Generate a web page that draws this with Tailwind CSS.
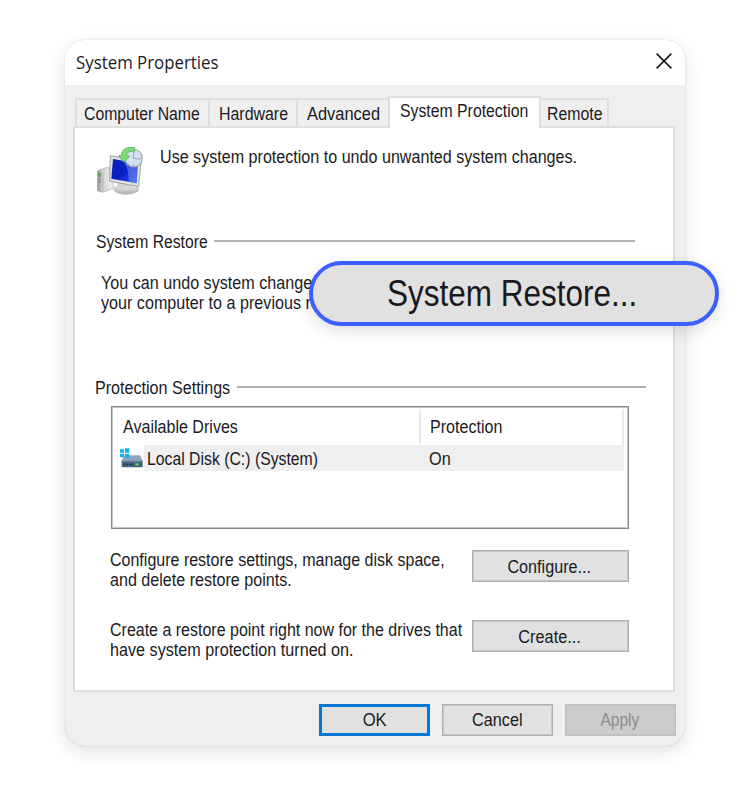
<!DOCTYPE html>
<html lang="en">
<head>
<meta charset="utf-8">
<title>System Properties</title>
<script src="https://cdn.jsdelivr.net/npm/@tailwindcss/browser@4"></script>
</head>
<body class="bg-white w-[750px] h-[787px] overflow-hidden pt-[40px] pl-[65px] font-['Liberation_Sans',Arial,sans-serif] text-[17.5px] leading-[20px] text-[#1a1a1e]">
<main class="relative w-[620px] h-[706px]">
  <div class="w-full h-full rounded-[20px] overflow-hidden bg-[#efefef] flex flex-col shadow-[0_5px_18px_rgba(0,0,0,0.12),0_0_1px_rgba(0,0,0,0.3)]">
    <header class="h-[45px] shrink-0 bg-white flex items-center justify-between pl-[11px] pr-[13px]">
      <h1 class="font-['Open_Sans',sans-serif] text-[19px] leading-[26px] -mt-[2px] w-[150px] whitespace-nowrap origin-left scale-x-[0.886]">System Properties</h1>
      <svg class="w-4 h-4 -mt-[3px]" viewBox="0 0 16 16" fill="none" stroke="#111" stroke-width="1.5"><path d="M.6.6l14.8 14.8M15.4.6L.6 15.4"/></svg>
    </header>

    <nav class="flex items-end h-[32px] mt-[11px] ml-[10px] shrink-0 relative z-10 whitespace-nowrap">
      <div class="w-[133px] h-[29px] border-2 border-b-0 border-r-0 border-[#dedede] pl-[7px] pt-[4px] mb-[1px]"><span class="inline-block origin-left scale-x-[0.902]">Computer Name</span></div>
      <div class="w-[88px] h-[29px] border-2 border-b-0 border-r-0 border-[#dedede] pl-[9px] pt-[4px] mb-[1px]"><span class="inline-block origin-left scale-x-[0.91]">Hardware</span></div>
      <div class="w-[92px] h-[29px] border-2 border-b-0 border-r-0 border-[#dedede] pl-[9px] pt-[4px] mb-[1px]"><span class="inline-block origin-left scale-x-[0.938]">Advanced</span></div>
      <div class="w-[153px] h-[32px] bg-white border-2 border-b-0 border-[#dedede] pl-[10px] pt-[3px]"><span class="inline-block origin-left scale-x-[0.903]">System Protection</span></div>
      <div class="w-[68px] h-[29px] border-2 border-b-0 border-l-0 border-[#dedede] pl-[6px] pt-[4px] mb-[1px]"><span class="inline-block origin-left scale-x-[0.905]">Remote</span></div>
    </nav>

    <section class="-mt-[2px] mx-[8px] w-[602px] h-[566px] shrink-0 bg-white border-2 border-[#dedede] flex flex-col">
      <div class="flex h-[67px] pt-[19px] pl-[22px]">
        <svg class="w-[48px] h-[48px] shrink-0" viewBox="36 21 144 144">
          <defs>
            <linearGradient id="scr" x1="0" y1="0" x2="1" y2="1"><stop offset="0" stop-color="#0a23b4"/><stop offset=".5" stop-color="#0b1fc4"/><stop offset="1" stop-color="#2b5be8"/></linearGradient>
            <linearGradient id="twr"><stop offset="0" stop-color="#8e9290"/><stop offset=".35" stop-color="#d4d6d5"/><stop offset="1" stop-color="#f0f0f0"/></linearGradient>
            <linearGradient id="bas" x1="0" y1="0" x2="0" y2="1"><stop offset="0" stop-color="#f4f4f4"/><stop offset="1" stop-color="#a9abab"/></linearGradient>
          </defs>
          <path d="M37 93l28-11 20 5v58l-32 12-16-5z" fill="url(#twr)" stroke="#a4a6a5" stroke-width="2"/>
          <path d="M54 96v59" stroke="#a8aaa9" stroke-width="2"/>
          <path d="M40 99l8 2v9l-8-2z" fill="#4d6b4b"/><circle cx="44" cy="105" r="3.5" fill="#45c247"/>
          <path d="M39 117l10 2M39 124l10 2" stroke="#777" stroke-width="2"/>
          <ellipse cx="124" cy="148" rx="37" ry="15" fill="url(#bas)" stroke="#b3b5b5" stroke-width="2"/>
          <path d="M95 122l43 9 2 17q-20 8-42-1z" fill="#d3d5d5"/>
          <path d="M76 47l92 16-7 77-87-17z" fill="#e1e2e1" stroke="#909493" stroke-width="2.5"/>
          <path d="M84 57l75 13-4 60-76-14z" fill="url(#scr)"/>
          <path d="M116 63l43 7-4 60-22-4c-5-24 2-25-17-63z" fill="#7b9bf5" opacity=".5"/>
          <circle cx="146" cy="54" r="26" fill="#d6e2f2" stroke="#a9b1b6" stroke-width="4"/>
          <path d="M146 55V34M146 55l19 3" stroke="#8fa3bf" stroke-width="3" fill="none"/>
          <path d="M169 54h-4M146 77v-4M126 54h4" stroke="#8494a9" stroke-width="3"/>
          <path d="M149 23c-22-5-41 6-39 23l-9 1 15 20 18-19-10-1c1-11 12-14 25-13z" fill="#7fd877" stroke="#43a845" stroke-width="2"/>
        </svg>
        <p class="ml-[15px] whitespace-nowrap w-[420px] h-[20px]"><span class="inline-block origin-left scale-x-[0.92]">Use system protection to undo unwanted system changes.</span></p>
      </div>

      <div class="flex items-center h-[20px] mt-[37px] pl-[21px] whitespace-nowrap">
        <h2 class="w-[118px]"><span class="inline-block origin-left scale-x-[0.897]">System Restore</span></h2>
        <div class="w-[421px] h-[2px] bg-[#b4b4b4] -mt-[2px]"></div>
      </div>
      <div class="h-[40px] mt-[21px] pl-[26px] whitespace-nowrap">
        <p class="origin-left scale-x-[0.922] w-[240px]">You can undo system changes and</p>
        <p class="origin-left scale-x-[0.922] w-[240px]">your computer to a previous restore</p>
      </div>

      <div class="flex items-center h-[20px] mt-[65px] pl-[20px] whitespace-nowrap">
        <h2 class="w-[142px]"><span class="inline-block origin-left scale-x-[0.92]">Protection Settings</span></h2>
        <div class="w-[409px] h-[2px] bg-[#b0b0b0] -mt-[2px]"></div>
      </div>
      <div class="ml-[36px] mt-[8px] w-[518px] h-[123px] border border-[#828790] ring-1 ring-inset ring-[#c3c6ca] pt-[2px] whitespace-nowrap">
        <div class="flex h-[36px] pl-[11px]">
          <div class="w-[296px] pt-[8px]"><span class="inline-block origin-left scale-x-[0.918]">Available Drives</span></div>
          <div class="w-[205px] pt-[8px] h-[36px] border-x-2 border-[#e9e9e9] pl-[9px]"><span class="inline-block origin-left scale-x-[0.918]">Protection</span></div>
        </div>
        <div class="flex h-[26px] pl-[8px]">
          <svg class="w-[23px] h-[20px] mt-[3px] mr-[1px] shrink-0" viewBox="105 235 69 60">
            <path d="M118 257h47l8 16h-63z" fill="#8fa6bd"/>
            <path d="M105 239h12v10h-12zM120 236h13v13h-13zM105 252h12v11h-12zM120 252h13v13h-13z" fill="#12aef0"/>
            <path d="M110 273h63v19q0 1-2 1h-59q-2 0-2-1z" fill="#46627d"/>
            <path d="M110 273h63v4h-63z" fill="#6583a0"/>
            <path d="M116 284h32" stroke="#1b2f42" stroke-width="4" stroke-dasharray="5 3"/>
            <path d="M151 281h10v6h-10z" fill="#6fdb2f"/>
          </svg>
          <div class="w-[480px] h-[26px] bg-[#efefef] flex pl-[3px] pt-[4px]">
            <div class="w-[282px]"><span class="inline-block origin-left scale-x-[0.902]">Local Disk (C:) (System)</span></div>
            <span class="inline-block origin-left scale-x-[0.93]">On</span>
          </div>
        </div>
      </div>

      <div class="flex ml-[35px] mt-[21px] h-[40px] whitespace-nowrap">
        <div class="w-[362px]">
          <p class="origin-left w-[361px] scale-x-[0.915]">Configure restore settings, manage disk space,</p>
          <p class="origin-left w-[361px] scale-x-[0.92]">and delete restore points.</p>
        </div>
        <button class="w-[157px] h-[32px] bg-[#e1e1e1] border border-[#adadad] ring-1 ring-inset ring-[#c8c8c8] flex items-center justify-center pt-[2px] pr-[2px]"><span class="scale-x-[0.925]">Configure...</span></button>
      </div>
      <div class="flex ml-[35px] mt-[30px] h-[40px] whitespace-nowrap">
        <div class="w-[362px]">
          <p class="origin-left w-[361px] scale-x-[0.914]">Create a restore point right now for the drives that</p>
          <p class="origin-left w-[361px] scale-x-[0.924]">have system protection turned on.</p>
        </div>
        <button class="w-[157px] h-[32px] bg-[#e1e1e1] border border-[#adadad] ring-1 ring-inset ring-[#c8c8c8] flex items-center justify-center pt-[2px] pr-[2px]"><span class="scale-x-[0.93]">Create...</span></button>
      </div>
    </section>

    <footer class="flex justify-end gap-[12px] mt-[12px] pr-[9px]">
      <button class="w-[111px] h-[32px] bg-[#e1e1e1] border-[3px] border-[#0078d7] flex items-center justify-center"><span class="scale-x-[0.95]">OK</span></button>
      <button class="w-[111px] h-[32px] bg-[#e1e1e1] border border-[#adadad] ring-1 ring-inset ring-[#c8c8c8] flex items-center justify-center"><span class="scale-x-[0.93]">Cancel</span></button>
      <button class="w-[111px] h-[32px] bg-[#cccccc] border border-[#bfbfbf] ring-1 ring-inset ring-[#c6c6c6] text-[#8b8b8b] flex items-center justify-center pr-[2px]"><span class="scale-x-[0.89]">Apply</span></button>
    </footer>
  </div>

  <button class="absolute left-[244px] top-[221px] w-[410px] h-[65px] rounded-full bg-[#e1e1e1] border-4 border-[#3c60ff] shadow-[0_5px_16px_rgba(0,0,0,0.13)] flex items-center pl-[74px] text-[36px] leading-[42px] whitespace-nowrap"><span class="origin-left scale-x-[0.875]">System Restore...</span></button>
</main>
</body>
</html>
